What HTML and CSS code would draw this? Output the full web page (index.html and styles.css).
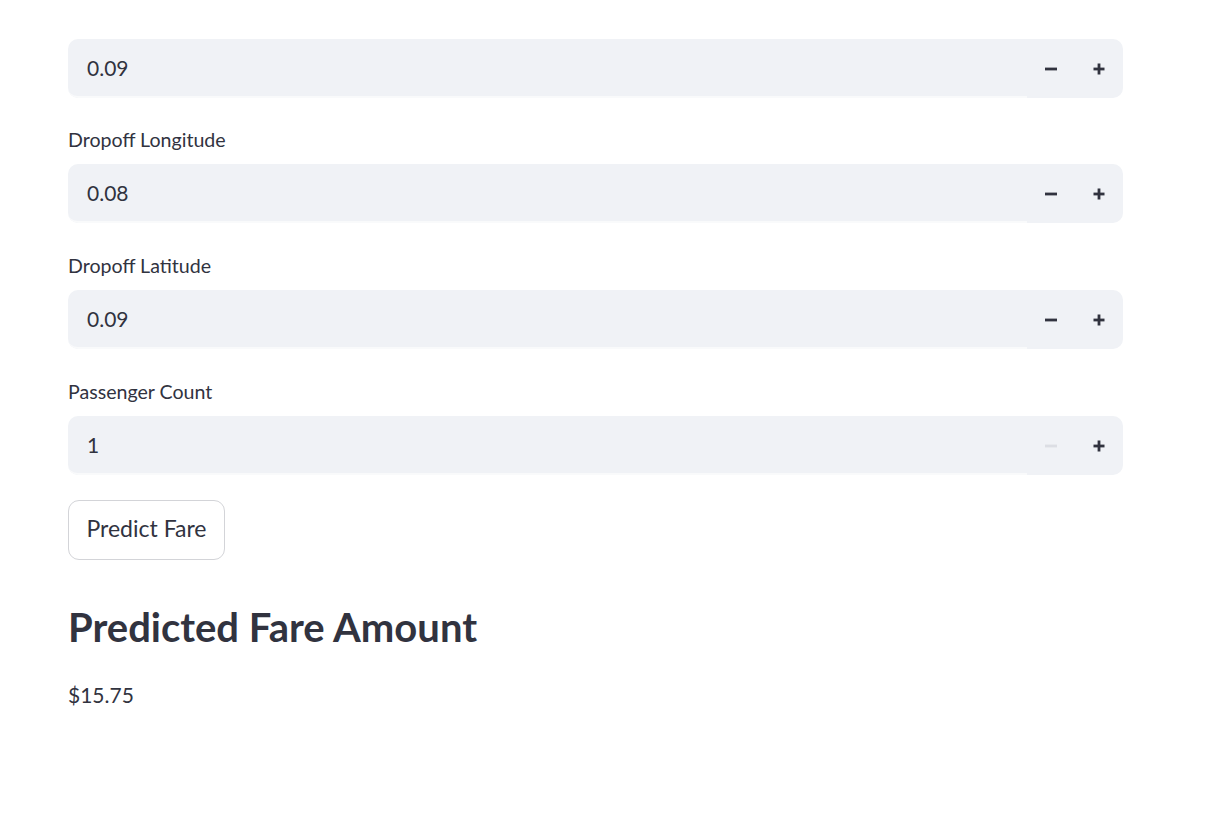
FILE: index.html
```html
<!DOCTYPE html>
<html lang="en">
<head>
<meta charset="utf-8">
<title>Fare Prediction</title>
<link rel="stylesheet" href="styles.css">
</head>
<body>
<main class="main">
  <div class="field first">
    <div class="num">
      <div class="num-input">0.09</div>
      <div class="num-btns">
        <span class="step"><svg width="14" height="14" viewBox="0 0 14 14"><rect x="1" y="5.6" width="12" height="2.8" fill="currentColor"/></svg></span>
        <span class="step"><svg width="14" height="14" viewBox="0 0 14 14"><rect x="1.5" y="5.6" width="11" height="2.8" fill="currentColor"/><rect x="5.6" y="1.5" width="2.8" height="11" fill="currentColor"/></svg></span>
      </div>
    </div>
  </div>
  <div class="field">
    <label class="lbl">Dropoff Longitude</label>
    <div class="num">
      <div class="num-input">0.08</div>
      <div class="num-btns">
        <span class="step"><svg width="14" height="14" viewBox="0 0 14 14"><rect x="1" y="5.6" width="12" height="2.8" fill="currentColor"/></svg></span>
        <span class="step"><svg width="14" height="14" viewBox="0 0 14 14"><rect x="1.5" y="5.6" width="11" height="2.8" fill="currentColor"/><rect x="5.6" y="1.5" width="2.8" height="11" fill="currentColor"/></svg></span>
      </div>
    </div>
  </div>
  <div class="field">
    <label class="lbl">Dropoff Latitude</label>
    <div class="num">
      <div class="num-input">0.09</div>
      <div class="num-btns">
        <span class="step"><svg width="14" height="14" viewBox="0 0 14 14"><rect x="1" y="5.6" width="12" height="2.8" fill="currentColor"/></svg></span>
        <span class="step"><svg width="14" height="14" viewBox="0 0 14 14"><rect x="1.5" y="5.6" width="11" height="2.8" fill="currentColor"/><rect x="5.6" y="1.5" width="2.8" height="11" fill="currentColor"/></svg></span>
      </div>
    </div>
  </div>
  <div class="field">
    <label class="lbl">Passenger Count</label>
    <div class="num">
      <div class="num-input">1</div>
      <div class="num-btns">
        <span class="step disabled"><svg width="14" height="14" viewBox="0 0 14 14"><rect x="1" y="5.6" width="12" height="2.8" fill="currentColor"/></svg></span>
        <span class="step"><svg width="14" height="14" viewBox="0 0 14 14"><rect x="1.5" y="5.6" width="11" height="2.8" fill="currentColor"/><rect x="5.6" y="1.5" width="2.8" height="11" fill="currentColor"/></svg></span>
      </div>
    </div>
  </div>
  <button class="btn" type="button">Predict Fare</button>
  <h2 class="title">Predicted Fare Amount</h2>
  <p class="result">$15.75</p>
</main>
</body>
</html>
```
FILE: styles.css
```css
* { box-sizing: border-box; }
html, body { margin: 0; background: #ffffff; }
body {
  font-family: "Lato", "Liberation Sans", sans-serif;
  color: #31333f;
}
.main {
  width: 1206px;
  padding: 39px 83px 0 68px;
  display: flex;
  flex-direction: column;
}
.field {
  display: flex;
  flex-direction: column;
  margin-bottom: 32px;
}
.field.first { margin-bottom: 31px; }
.field:nth-child(4) { margin-bottom: 25px; }
.lbl {
  font-size: 19.6px;
  line-height: 22px;
  height: 22px;
  margin-bottom: 13px;
  color: #31333f;
}
.num {
  display: flex;
  height: 59px;
  width: 1055px;
  background: #f0f2f6;
  border-radius: 10px;
  overflow: hidden;
}
.num-input {
  flex: 1;
  display: flex;
  align-items: center;
  padding-left: 19px;
  font-size: 21px;
  border-bottom: 2px solid #f9fafb;
  border-radius: 10px 0 0 10px;
  padding-top: 0;
}
.num-btns {
  display: flex;
  width: 96px;
}
.step {
  width: 48px;
  display: flex;
  align-items: center;
  justify-content: center;
  color: #31333f;
}
.step.disabled { color: #dcdee4; }
.btn {
  align-self: flex-start;
  width: 157px;
  height: 60px;
  background: #ffffff;
  border: 1px solid #d3d4d8;
  border-radius: 11px;
  font-family: inherit;
  font-size: 23px;
  color: #31333f;
  padding: 0 0 4px 0;
  margin: 0;
}
.title {
  margin: 37px 0 0 0;
  font-size: 40px;
  line-height: 60px;
  font-weight: 700;
  color: #31333f;
}
.result {
  margin: 23px 0 0 0;
  font-size: 21px;
  line-height: 30px;
}
```
